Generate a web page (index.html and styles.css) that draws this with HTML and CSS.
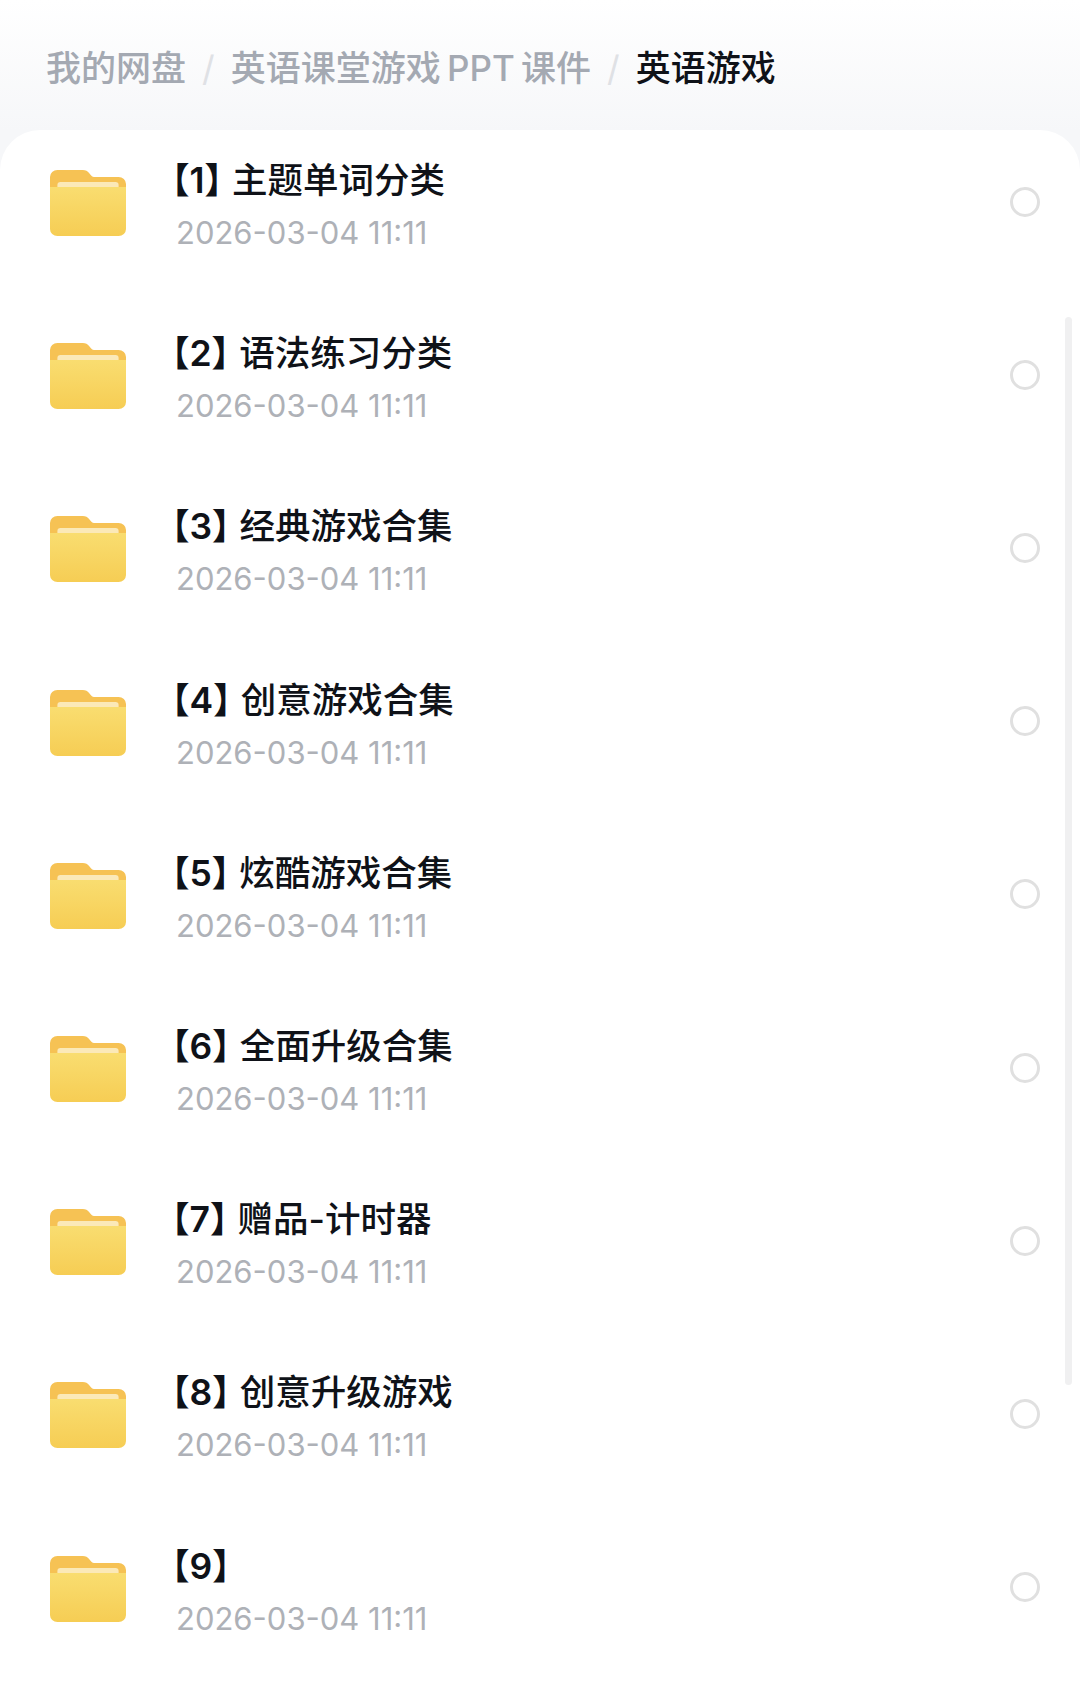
FILE: index.html
```html
<!DOCTYPE html>
<html lang="zh-CN">
<head>
    <meta charset="UTF-8">
    <meta name="viewport" content="width=device-width, initial-scale=1.0">
    <title>英语游戏</title>
    <link rel="stylesheet" href="styles.css">
</head>
<body>
    <svg class="defs" width="0" height="0">
        <defs>
            <linearGradient id="folderFront" x1="0" y1="0" x2="0" y2="1">
                <stop offset="0" stop-color="#f9dd70"/>
                <stop offset="1" stop-color="#f6cd54"/>
            </linearGradient>
            <symbol id="folder" viewBox="0 0 72 66" preserveAspectRatio="none">
                <path d="M0 7a7 7 0 0 1 7-7h24c3 0 4.500 1 6 3l2 2.500c1 1 2 1.500 4 1.500h22a7 7 0 0 1 7 7v20H0z" fill="#f6c254"/>
                <rect x="7" y="12" width="58" height="8" rx="3" fill="#fbe9b8"/>
                <path d="M0 17h72v42a7 7 0 0 1-7 7H7a7 7 0 0 1-7-7z" fill="url(#folderFront)"/>
            </symbol>
        </defs>
    </svg>

    <nav class="crumbs">
        <span>我的网盘</span>
        <i>/</i>
        <span>英语课堂游戏 PPT 课件</span>
        <i>/</i>
        <span class="current">英语游戏</span>
    </nav>

    <div class="card">
        <div class="bar"></div>

        <div class="row">
            <svg class="folder"><use href="#folder"/></svg>
            <div class="info">
                <div class="name"><span class="tag">【1】</span>主题单词分类</div>
                <div class="date">2026-03-04 11:11</div>
            </div>
            <span class="radio"></span>
        </div>
        <div class="row">
            <svg class="folder"><use href="#folder"/></svg>
            <div class="info">
                <div class="name"><span class="tag">【2】</span>语法练习分类</div>
                <div class="date">2026-03-04 11:11</div>
            </div>
            <span class="radio"></span>
        </div>
        <div class="row">
            <svg class="folder"><use href="#folder"/></svg>
            <div class="info">
                <div class="name"><span class="tag">【3】</span>经典游戏合集</div>
                <div class="date">2026-03-04 11:11</div>
            </div>
            <span class="radio"></span>
        </div>
        <div class="row">
            <svg class="folder"><use href="#folder"/></svg>
            <div class="info">
                <div class="name"><span class="tag">【4】</span>创意游戏合集</div>
                <div class="date">2026-03-04 11:11</div>
            </div>
            <span class="radio"></span>
        </div>
        <div class="row">
            <svg class="folder"><use href="#folder"/></svg>
            <div class="info">
                <div class="name"><span class="tag">【5】</span>炫酷游戏合集</div>
                <div class="date">2026-03-04 11:11</div>
            </div>
            <span class="radio"></span>
        </div>
        <div class="row">
            <svg class="folder"><use href="#folder"/></svg>
            <div class="info">
                <div class="name"><span class="tag">【6】</span>全面升级合集</div>
                <div class="date">2026-03-04 11:11</div>
            </div>
            <span class="radio"></span>
        </div>
        <div class="row">
            <svg class="folder"><use href="#folder"/></svg>
            <div class="info">
                <div class="name"><span class="tag">【7】</span>赠品-计时器</div>
                <div class="date">2026-03-04 11:11</div>
            </div>
            <span class="radio"></span>
        </div>
        <div class="row">
            <svg class="folder"><use href="#folder"/></svg>
            <div class="info">
                <div class="name"><span class="tag">【8】</span>创意升级游戏</div>
                <div class="date">2026-03-04 11:11</div>
            </div>
            <span class="radio"></span>
        </div>
        <div class="row">
            <svg class="folder"><use href="#folder"/></svg>
            <div class="info">
                <div class="name"><span class="tag">【9】</span></div>
                <div class="date">2026-03-04 11:11</div>
            </div>
            <span class="radio"></span>
        </div>
    </div>
</body>
</html>
```

FILE: styles.css
```css
html, body {
    margin: 0;
    padding: 0;
}

body {
    width: 1080px;
    height: 1690px;
    overflow: hidden;
    background: linear-gradient(#ffffff, #f6f7f9 130px);
    font-family: Inter, "Noto Sans CJK SC", sans-serif;
}

.defs {
    display: block;
    height: 0;
}

.crumbs {
    height: 130px;
    box-sizing: border-box;
    padding: 47px 0 0 46px;
    display: flex;
    align-items: flex-start;
    gap: 16px;
    font-size: 35px;
    line-height: 42px;
    font-weight: 500;
    word-spacing: -3px;
    color: #a4a9b2;
}

.crumbs i {
    font-style: normal;
    font-weight: 400;
    color: #dfe1e5;
}

.crumbs .current {
    color: #0f1218;
}

.card {
    position: relative;
    height: 1560px;
    background: #fff;
    border-radius: 40px 40px 0 0;
}

.bar {
    position: absolute;
    top: 187px;
    right: 8px;
    width: 7px;
    height: 1068px;
    background: #f0f0f1;
    border-radius: 4px;
}

.row {
    height: 173.2px;
    box-sizing: border-box;
    display: flex;
    align-items: center;
    padding: 0 40px 30px 50px;
}

.folder {
    width: 76px;
    height: 66px;
    margin-top: 3px;
    flex-shrink: 0;
}

.info {
    flex: 1;
    margin-left: 50px;
    padding-top: 9px;
}

.name {
    margin-left: -22px;
    font-size: 35.5px;
    line-height: 44px;
    font-weight: 500;
    color: #0f1218;
}

.tag {
    margin-right: -8px;
    font-weight: 600;
}

.date {
    margin-top: 10px;
    font-size: 31px;
    line-height: 40px;
    color: #aeb1b7;
}

.radio {
    width: 24px;
    height: 24px;
    border: 3px solid #e0e0e0;
    border-radius: 50%;
}
```
